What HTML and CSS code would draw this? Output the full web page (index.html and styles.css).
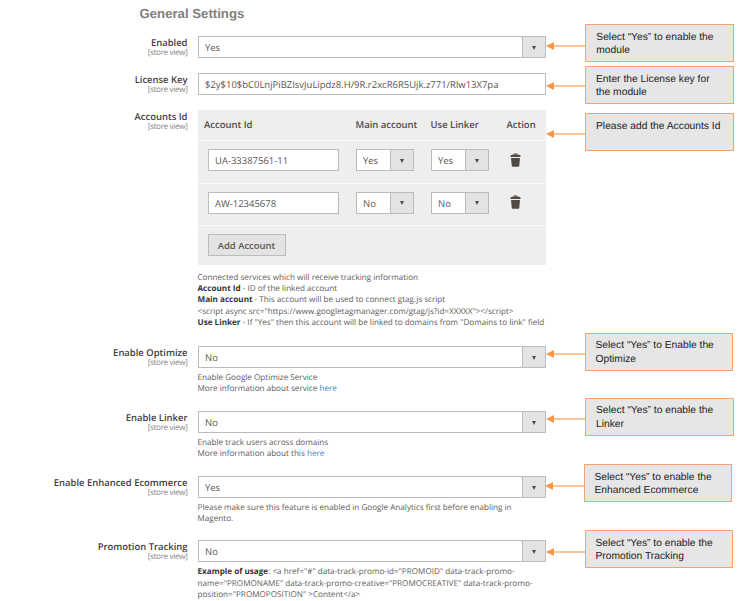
FILE: index.html
```html
<!DOCTYPE html>
<html lang="en">
<head>
<meta charset="utf-8">
<title>General Settings</title>
<link rel="stylesheet" href="styles.css">
</head>
<body>
<svg class="sprite" width="0" height="0">
  <symbol id="trash" viewBox="0 0 11 14">
    <path d="M0.4 4.1V3.2Q0.5 1.9 2 1.8H3.1Q3.3 0.3 5.5 0.3T7.9 1.8H9Q10.500 1.900 10.600 3.200V4.100ZM4.200 1.800H6.800Q6.600 1.200 5.500 1.200T4.200 1.800Z" fill="#514943" fill-rule="evenodd"/>
    <path d="M1 5H10L9.200 13Q9.100 13.700 8.300 13.700H2.700Q1.900 13.700 1.800 13Z" fill="#514943"/>
  </symbol>
</svg>
<div class="page">
  <main class="form">
    <h1 class="title">General Settings</h1>

    <section class="row short">
      <div class="label"><b>Enabled</b><span>[store view]</span></div>
      <div class="value"><div class="select"><span>Yes</span><i></i></div></div>
    </section>

    <section class="row short">
      <div class="label"><b>License Key</b><span>[store view]</span></div>
      <div class="value"><div class="input key">$2y$10$bC0LnjPiBZIsvJuLipdz8.H/9R.r2xcR6R5Ujk.z771/Rlw13X7pa</div></div>
    </section>

    <section class="row accounts">
      <div class="label"><b>Accounts Id</b><span>[store view]</span></div>
      <div class="value">
        <div class="table">
          <div class="line head"><span>Account Id</span><span>Main account</span><span>Use Linker</span><span>Action</span></div>
          <div class="line">
            <div class="input">UA-33387561-11</div>
            <div class="select small"><span>Yes</span><i></i></div>
            <div class="select small"><span>Yes</span><i></i></div>
            <svg class="trash"><use href="#trash"/></svg>
          </div>
          <div class="line">
            <div class="input">AW-12345678</div>
            <div class="select small"><span>No</span><i></i></div>
            <div class="select small"><span>No</span><i></i></div>
            <svg class="trash"><use href="#trash"/></svg>
          </div>
          <div class="foot"><button class="add">Add Account</button></div>
        </div>
        <p class="note">Connected services which will receive tracking information<br><b>Account Id</b> - ID of the linked account<br><b>Main account</b> - This account will be used to connect gtag.js script<br>&lt;script async src="https://www.googletagmanager.com/gtag/js?id=XXXXX"&gt;&lt;/script&gt;<br><b>Use Linker</b> - If "Yes" then this account will be linked to domains from "Domains to link" field</p>
      </div>
    </section>

    <section class="row">
      <div class="label"><b>Enable Optimize</b><span>[store view]</span></div>
      <div class="value"><div class="select"><span>No</span><i></i></div>
        <p class="note">Enable Google Optimize Service<br>More information about service <a>here</a></p></div>
    </section>

    <section class="row">
      <div class="label"><b>Enable Linker</b><span>[store view]</span></div>
      <div class="value"><div class="select"><span>No</span><i></i></div>
        <p class="note">Enable track users across domains<br>More information about this <a>here</a></p></div>
    </section>

    <section class="row">
      <div class="label"><b>Enable Enhanced Ecommerce</b><span class="clipped">[store view]</span></div>
      <div class="value"><div class="select"><span>Yes</span><i></i></div>
        <p class="note">Please make sure this feature is enabled in Google Analytics first before enabling in<br>Magento.</p></div>
    </section>

    <section class="row last">
      <div class="label"><b>Promotion Tracking</b><span>[store view]</span></div>
      <div class="value"><div class="select"><span>No</span><i></i></div>
        <p class="note"><b>Example of usage</b>: &lt;a href="#" data-track-promo-id="PROMOID" data-track-promo-<br>name="PROMONAME" data-track-promo-creative="PROMOCREATIVE" data-track-promo-<br>position="PROMOPOSITION" &gt;Content&lt;/a&gt;</p></div>
    </section>
  </main>

  <aside class="hints">
    <div class="hint h1"><svg class="arrow" viewBox="0 0 39 8"><path d="M6 4H39"/><path class="tip" d="M0 4L8 0V8Z"/></svg><p>Select “Yes” to enable the<br>module</p></div>
    <div class="hint h2"><svg class="arrow" viewBox="0 0 39 8"><path d="M6 4H39"/><path class="tip" d="M0 4L8 0V8Z"/></svg><p>Enter the License key for<br>the module</p></div>
    <div class="hint h3"><svg class="arrow" viewBox="0 0 39 8"><path d="M6 4H39"/><path class="tip" d="M0 4L8 0V8Z"/></svg><p>Please add the Accounts Id</p></div>
    <div class="hint h4"><svg class="arrow" viewBox="0 0 39 8"><path d="M6 4H39"/><path class="tip" d="M0 4L8 0V8Z"/></svg><p>Select “Yes” to Enable the<br>Optimize</p></div>
    <div class="hint h5"><svg class="arrow" viewBox="0 0 39 8"><path d="M6 4H39"/><path class="tip" d="M0 4L8 0V8Z"/></svg><p>Select “Yes” to enable the<br>Linker</p></div>
    <div class="hint h6"><svg class="arrow" viewBox="0 0 39 8"><path d="M6 4H39"/><path class="tip" d="M0 4L8 0V8Z"/></svg><p>Select “Yes” to enable the<br>Enhanced Ecommerce</p></div>
    <div class="hint h7"><svg class="arrow" viewBox="0 0 39 8"><path d="M6 4H39"/><path class="tip" d="M0 4L8 0V8Z"/></svg><p>Select “Yes” to enable the<br>Promotion Tracking</p></div>
  </aside>
</div>
</body>
</html>
```
FILE: styles.css
```css
* { box-sizing: border-box; }
body {
  margin: 0;
  background: #fff;
  color: #58534f;
  font: 9.47px/12px "Open Sans", sans-serif;
  text-rendering: geometricPrecision;
}
.sprite { display: block; }
.page { display: flex; width: 750px; height: 601px; overflow: hidden; }
.form { width: 546px; flex: none; }
.title {
  margin: 0;
  height: 36px;
  padding: 6px 0 0 139.5px;
  font: bold 13.2px/15px "Liberation Sans", sans-serif;
  color: #7f7f7f;
}
.row { display: flex; gap: 10px; height: 65px; }
.row.short { height: 37px; }
.row.accounts { height: 236px; }
.row.last { margin-top: -0.6px; }
.label { width: 187.500px; flex: none; text-align: right; padding-top: 1px; }
.label b {
  display: block;
  font-weight: 600;
  font-size: 9.45px;
  line-height: 11px;
  color: #45403c;
}
.label span { display: block; font-size: 8.1px; letter-spacing: -0.33px; line-height: 10px; color: #858585; }
.label .clipped { height: 8px; overflow: hidden; }
.value { width: 348.5px; flex: none; }
.input, .select {
  height: 22px;
  background: #fff;
  border: 1px solid #bcbcbc;
  line-height: 21px;
  padding-left: 6.500px;
  white-space: nowrap;
}
.select { display: flex; justify-content: space-between; }
.select i {
  display: flex;
  align-items: center;
  justify-content: center;
  width: 23px;
  border-left: 1px solid #bcbcbc;
  background: #e3e3e3;
}
.select i::before {
  content: "";
  margin-top: 1px;
  border: 2.5px solid transparent;
  border-top: 4px solid #514943;
  border-bottom: 0;
}
.table { height: 155px; background: #eee; }
.line {
  display: grid;
  grid-template-columns: 148px 75px 79.500px 12px;
  align-items: start;
  height: 42.5px;
  padding: 8px 0 0 10px;
  border-top: 1px solid #fafafa;
}
.line .input { width: 131px; }
.line.head {
  align-items: center;
  height: 30px;
  padding: 0 0 0 6.500px;
  grid-template-columns: 151.500px 75px 76px 40px;
  border: 0;
  font-weight: 600;
  color: #514b47;
}
.select.small { width: 58.500px; }
.trash { width: 11px; height: 14px; margin-top: 3.5px; }
.foot { border-top: 1px solid #fafafa; padding: 8px 10px; }
.add {
  display: block;
  width: 78px;
  height: 22px;
  padding: 0;
  border: 1px solid #bcbcbc;
  background: #e3e3e3;
  color: #5c544e;
  font: 600 9.45px/19px "Open Sans", sans-serif;
}
.note { margin: 4px 0 0; font-size: 8.14px; line-height: 11.2px; white-space: nowrap; color: #605c59; }
.accounts .note { margin-top: 7px; }
.note b { color: #37322f; }
.note a { color: #3b84c8; }
.hints { width: 204px; flex: none; }
.hint { display: flex; height: 38px; }
.hint p {
  margin: 0;
  width: 148.500px;
  height: 38px;
  padding: 5.5px 0 0 10px;
  border: 1px solid #f6a36d;
  background: #e6e6e6;
  color: #222;
  font: 10.28px/13.6px "Liberation Sans", sans-serif;
  white-space: nowrap;
}
.arrow { width: 39px; height: 8px; flex: none; margin-top: 18px; }
.arrow path { stroke: #fbb277; stroke-width: 1.4; }
.arrow .tip { fill: #f79646; stroke: none; }
.h1 { margin: 24px 0 0 0.300px; }
.h2 { margin-top: 4.300px; }
.h2 .arrow { margin-top: 15.500px; }
.h3 { margin-top: 9px; }
.h3 .arrow { margin-top: 17px; }
.h3 p { padding-top: 6px; }
.h4 { margin: 181.500px 0 0 -0.500px; }
.h5 { margin-top: 27px; }
.h6 { margin: 28.500px 0 0 -1.500px; }
.h7 { margin: 28px 0 0 -0.500px; }
.h4 .arrow, .h5 .arrow, .h6 .arrow, .h7 .arrow { margin-top: 17.500px; }
```
